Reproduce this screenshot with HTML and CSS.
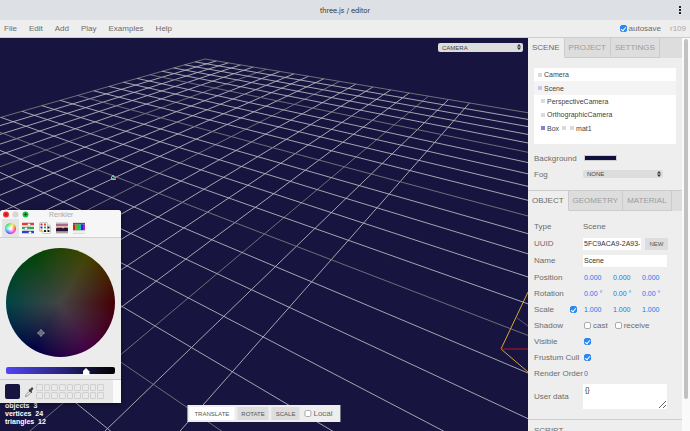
FILE: index.html
```html
<!DOCTYPE html>
<html lang="en">
<head>
  <meta charset="UTF-8" />
  <title>three.js / editor</title>
  <link rel="stylesheet" href="styles.css">
</head>
<body>
  <header class="titlebar">
    <span class="title">three.js / editor</span>
    <button class="more" aria-label="More"><i></i><i></i><i></i></button>
  </header>

  <nav class="menubar">
    <a href="#">File</a>
    <a href="#">Edit</a>
    <a href="#">Add</a>
    <a href="#">Play</a>
    <a href="#">Examples</a>
    <a href="#">Help</a>
    <label class="autosave"><input type="checkbox" checked> autosave</label>
    <span class="version">r109</span>
  </nav>

  <main class="editor">
    <section class="viewport">
      <svg class="scene" viewBox="0 38 528 393" preserveAspectRatio="xMinYMin slice">
        <g id="grid"></g>
        <path d="M517 318L528 326" stroke="#77778c" stroke-width=".7" />
        <path d="M528 292L501 349L528 372" fill="none" stroke="#d8a82c" />
        <path d="M501 349H528" stroke="#b5122c" />
        <path d="M111.500 176.500v3h4l-1-3" fill="none" stroke="#e0b04a" />
        <rect x="112" y="175" width="2" height="2" fill="#35d0dc" />
      </svg>

      <div class="select camera">
        <select aria-label="Camera"><option>CAMERA</option></select>
        <svg viewBox="0 0 4 6"><path d="M2 0L4 2.400H0zM2 6L4 3.600H0z" /></svg>
      </div>

      <div class="stats">objects &nbsp;3<br>vertices &nbsp;24<br>triangles &nbsp;12</div>

      <div class="toolbar">
        <button class="selected">TRANSLATE</button>
        <button>ROTATE</button>
        <button>SCALE</button>
        <label><input type="checkbox"> Local</label>
      </div>
    </section>

    <aside class="sidebar">
      <div class="content">
        <div class="tabs">
          <button class="active">SCENE</button>
          <button>PROJECT</button>
          <button>SETTINGS</button>
        </div>
        <div class="panel scene-panel">
          <ul class="outliner">
            <li><i></i>Camera</li>
            <li class="current"><i class="lilac"></i>Scene</li>
            <li class="child"><i></i>PerspectiveCamera</li>
            <li class="child"><i></i>OrthographicCamera</li>
            <li class="child"><i class="blue"></i>Box<i class="geometry"></i><i class="material"></i>mat1</li>
          </ul>
          <div class="row"><label for="bg">Background</label><button id="bg" class="color" aria-label="Background color"></button></div>
          <div class="row">
            <label for="fog">Fog</label>
            <div class="select fog">
              <select id="fog"><option>NONE</option></select>
              <svg viewBox="0 0 4 6"><path d="M2 0L4 2.400H0zM2 6L4 3.600H0z" /></svg>
            </div>
          </div>
        </div>

        <div class="tabs object-tabs">
          <button class="active">OBJECT</button>
          <button>GEOMETRY</button>
          <button>MATERIAL</button>
        </div>
        <div class="panel object-panel">
          <div class="row tall"><span class="label">Type</span><span>Scene</span></div>
          <div class="row tall"><label for="uuid">UUID</label><input id="uuid" class="text uuid" type="text" value="5FC9ACA9-2A93-"><button class="new">NEW</button></div>
          <div class="row tall"><label for="name">Name</label><input id="name" class="text" type="text" value="Scene"></div>
          <div class="row"><label for="px">Position</label><input id="px" class="number" value="0.000"><input class="number" aria-label="Position y" value="0.000"><input class="number" aria-label="Position z" value="0.000"></div>
          <div class="row"><label for="rx">Rotation</label><input id="rx" class="number" value="0.00 °"><input class="number" aria-label="Rotation y" value="0.00 °"><input class="number" aria-label="Rotation z" value="0.00 °"></div>
          <div class="row"><label class="short" for="sx">Scale</label><input type="checkbox" class="lock" aria-label="Lock scale" checked><input id="sx" class="number" value="1.000"><input class="number" aria-label="Scale y" value="1.000"><input class="number" aria-label="Scale z" value="1.000"></div>
          <div class="row"><span class="label">Shadow</span><label class="check"><input type="checkbox">cast</label><label class="check"><input type="checkbox">receive</label></div>
          <div class="row"><label for="visible">Visible</label><input id="visible" class="inset" type="checkbox" checked></div>
          <div class="row"><label for="cull">Frustum Cull</label><input id="cull" class="inset" type="checkbox" checked></div>
          <div class="row"><label for="order">Render Order</label><input id="order" class="number" value="0"></div>
          <div class="row data"><label for="data">User data</label><textarea id="data">{}</textarea></div>
        </div>
        <div class="script-panel">SCRIPT</div>
      </div>
      <div class="scrollbar"><div class="thumb"></div></div>
    </aside>
  </main>

  <section class="colors">
    <div class="colors-head">
      <div class="colors-title">
        <svg class="lights" viewBox="0 0 27 7">
          <circle cx="4" cy="3.500" r="3" fill="#f4323c" /><path d="M2.800 2.300l2.400 2.400m0-2.400l-2.400 2.400" stroke="#7c0008" stroke-width=".8" />
          <circle cx="13.500" cy="3.500" r="2.800" fill="#d8d8d8" stroke="#c6c6c6" stroke-width=".4" />
          <circle cx="23.500" cy="3.500" r="3" fill="#19c440" /><path d="M21.800 3.500h3.400M23.500 1.800v3.400" stroke="#065c14" stroke-width=".9" />
        </svg>
        <span>Renkler</span>
      </div>
      <div class="modes">
        <button class="on" aria-label="Wheel"><span class="mini-wheel"></span></button>
        <button aria-label="Sliders">
          <svg viewBox="0 0 12 12"><path d="M0 2h12" stroke="#e23b3b" stroke-width="2.500" /><path d="M0 6h12" stroke="#2fae4c" stroke-width="2.500" /><path d="M0 10h12" stroke="#2b3fd4" stroke-width="2.500" /><path d="M0 4h12M0 8h12" stroke="#ddd" /><path d="M7 1l1.500 1.500V4h-3V2.500zM4 5l1.500 1.500V8h-3V6.500zM8 9l1.500 1.500V12h-3v-1.500z" fill="#fff" stroke="#888" stroke-width=".4" /></svg>
        </button>
        <button aria-label="Palettes">
          <svg viewBox="0 0 12 12"><rect x="3.500" y="3" width="8" height="8.500" rx="1" fill="#fff" stroke="#aaa" stroke-width=".6" /><rect x=".5" y=".5" width="8" height="9" rx="1" fill="#fff" stroke="#aaa" stroke-width=".6" /><path d="M1.500 1.500h2v2h-2z" fill="#b33" /><path d="M5 1.500h2v2H5z" fill="#e33" /><path d="M1.500 4.500h2v2h-2z" fill="#22b" /><path d="M5 4.500h2v2H5z" fill="#2a4" /><path d="M8.500 4.500h2v2h-2zM5 8h2v2H5zM8.500 8h2v2h-2z" fill="#222" /><path d="M1.500 7.500h2v1.500h-2z" fill="#c9a820" /></svg>
        </button>
        <button aria-label="Image">
          <svg viewBox="0 0 12 12"><rect y=".5" width="12" height="11" fill="#bbb" /><path d="M0 2h12v2H0z" fill="#a06a92" /><path d="M0 4h12v2.500H0z" fill="#f4b99d" /><path d="M0 6.500l2-1 1 .5 2-.5 2 1 2-1 3 .5V9H0z" fill="#1f1830" /><path d="M0 9h12v1.500H0z" fill="#a77b9d" /></svg>
        </button>
        <button aria-label="Pencils">
          <svg viewBox="0 0 12 12"><rect y=".5" width="12" height="11" fill="#c4c4c4" /><path d="M0 1h12v1.500H0z" fill="#555" /><path d="M0 2.500h2V8H0z" fill="#c22" /><path d="M2 2.500h2V8H2z" fill="#7a2" /><path d="M4 2.500h2V8H4z" fill="#1c5" /><path d="M6 2.500h2V8H6z" fill="#1bc" /><path d="M8 2.500h2V8H8z" fill="#22d" /><path d="M10 2.500h2V8h-2z" fill="#a2b" /><path d="M0 9h12v2H0z" fill="#eee" /></svg>
        </button>
      </div>
    </div>
    <div class="wheel-box">
      <div class="wheel">
        <svg class="cross" viewBox="0 0 8 8"><circle cx="4" cy="4" r="2.400" /><path d="M4 0v8M0 4h8" /></svg>
      </div>
      <input class="brightness" type="range" aria-label="Brightness" min="0" max="100" value="75">
    </div>
    <div class="colors-foot">
      <div class="swatch"></div>
      <svg class="pipette" viewBox="0 0 10 12"><path d="M1.500 10.500l.6-2L6 4.500l1.500 1.500-4 4z" fill="#eee" stroke="#777" stroke-width=".8" /><path d="M5 3.600L7.800 6.500" stroke="#444" stroke-width="1.400" /><path d="M6.300 4.800l1.800-2.200" stroke="#444" stroke-width="2.400" stroke-linecap="round" /></svg>
      <div class="saved">
        <i></i><i></i><i></i><i></i><i></i><i></i><i></i><i></i><i></i>
        <i></i><i></i><i></i><i></i><i></i><i></i><i></i><i></i><i></i>
      </div>
      <div class="edge"></div>
    </div>
  </section>

  <script src="grid.js"></script>
</body>
</html>
```

FILE: styles.css
```css
* {
  box-sizing: border-box;
}

body {
  margin: 0;
  height: 100vh;
  display: flex;
  flex-direction: column;
  overflow: hidden;
  background: #eee;
  color: #6c6c6c;
  font-family: "Liberation Sans", Arial, sans-serif;
  font-size: 8px;
}

button, input, select, textarea {
  margin: 0;
  padding: 0;
  border: 0;
  font-family: inherit;
  color: inherit;
}

input[type="checkbox"] {
  appearance: none;
  flex: none;
  width: 7px;
  height: 7px;
  border: 1px solid #aaa;
  border-radius: 2px;
  background: #fff;
}

input[type="checkbox"]:checked {
  border-color: #2b87f3;
  background: #2b87f3;
  display: grid;
  place-items: center;
}

input[type="checkbox"]:checked::after {
  content: "";
  width: 2px;
  height: 4px;
  border: solid #fff;
  border-width: 0 1px 1px 0;
  transform: rotate(40deg);
}

.titlebar {
  flex: none;
  height: 20px;
  display: flex;
  align-items: center;
  justify-content: center;
  background: #dde1e6;
  color: #333;
  font-family: Inter, sans-serif;
  font-size: 7px;
  position: relative;
}

.more {
  position: absolute;
  right: 8px;
  display: grid;
  gap: 1px;
  padding: 0 1px;
  background: none;
}

.more i {
  width: 2px;
  height: 2px;
  background: #222;
}

.menubar {
  flex: none;
  height: 18px;
  display: flex;
  align-items: center;
  gap: 12px;
  padding: 0 4px;
  border-bottom: 1px solid #ccc;
}

.menubar a {
  color: #6c6c6c;
  text-decoration: none;
}

.autosave {
  display: flex;
  align-items: center;
  gap: 2px;
  margin-left: auto;
}

.version {
  margin-left: -3px;
  color: #aaa;
}

.editor {
  flex: 1;
  min-height: 0;
  display: flex;
}

.viewport {
  flex: 1;
  min-width: 0;
  position: relative;
  background: #17153f;
  overflow: hidden;
}

.scene {
  display: block;
  width: 100%;
  height: 100%;
}

#grid line {
  stroke: #b4b4bd;
  stroke-width: .9;
}

#grid line.major {
  stroke: #787880;
}

.select {
  position: relative;
}

.select select {
  display: block;
  appearance: none;
  width: 100%;
  height: 8px;
  padding: 0 4px;
  border-radius: 2px;
  background: #ddd;
  color: #444;
  font-size: 6px;
  line-height: 8px;
}

.select svg {
  position: absolute;
  top: 1px;
  right: 2px;
  width: 4px;
  height: 6px;
  fill: #333;
  pointer-events: none;
}

.camera {
  position: absolute;
  top: 5px;
  right: 5px;
  width: 85px;
}

.camera select {
  height: 9px;
}

.stats {
  position: absolute;
  left: 5px;
  bottom: 5px;
  color: #fff;
  font-size: 7px;
  font-weight: bold;
  line-height: 8px;
}

.toolbar {
  position: absolute;
  left: 50%;
  bottom: 9px;
  transform: translateX(-50%);
  height: 17px;
  padding: 2px;
  display: flex;
  align-items: center;
  gap: 3px;
  background: #eee;
}

.toolbar button {
  height: 13px;
  padding: 0 4px;
  background: #ddd;
  color: #555;
  font-size: 6px;
}

.toolbar button.selected {
  background: #fff;
  padding: 0 5px;
}

.toolbar label {
  display: flex;
  align-items: center;
  gap: 2px;
  padding: 0 6px 0 2px;
}

.sidebar {
  flex: none;
  width: 162px;
  display: flex;
  overflow: hidden;
}

.content {
  flex: 1;
  min-width: 0;
}

.scrollbar {
  flex: none;
  width: 8px;
  padding: 1px 2px;
  background: #fafafa;
}

.thumb {
  height: 92%;
  border-radius: 2px;
  background: #c1c1c1;
}

.tabs {
  display: flex;
  height: 20px;
  background: #ddd;
}

.tabs button {
  padding: 0 4px;
  border-right: 1px solid #ccc;
  border-bottom: 1px solid #ccc;
  background: #ddd;
  color: #9c9c9c;
  font-size: 8px;
}

.tabs button.active {
  background: #eee;
  border-bottom-color: #eee;
  color: #6c6c6c;
}

.object-tabs {
  height: 21px;
  border-top: 1px solid #ccc;
}

.panel {
  padding: 0 6px;
}

.scene-panel {
  padding-top: 10px;
  padding-bottom: 8px;
}

.outliner {
  height: 76px;
  margin: 0 0 6px;
  padding: 0 0 9px;
  display: grid;
  grid-template-rows: repeat(5, 1fr);
  list-style: none;
  background: #fff;
  color: #444;
  font-size: 7px;
}

.outliner li {
  display: flex;
  align-items: center;
  padding-left: 4px;
}

.outliner .child {
  padding-left: 7px;
}

.outliner .current {
  background: #f4f4f4;
}

.outliner i {
  width: 4px;
  height: 4px;
  margin-right: 2px;
  background: #dadada;
}

.outliner .lilac {
  background: #c8c4f6;
}

.outliner .blue {
  background: #8080e0;
}

.outliner .geometry {
  margin: 0 4px 0 3px;
}

.row {
  display: flex;
  align-items: center;
  height: 16px;
}

.row.tall {
  height: 17px;
}

.row > label:first-child, .label {
  flex: none;
  width: 49px;
  white-space: nowrap;
}

.row > label.short:first-child {
  width: 36px;
}

.lock {
  margin-right: 6px;
}

.color {
  width: 33px;
  height: 6px;
  margin-left: 1px;
  border: 1px solid #ccc;
  background: #110f3c;
}

.fog {
  width: 80px;
}

.object-panel {
  padding-top: 7px;
}

.text {
  width: 84px;
  height: 12px;
  padding: 0 1px;
  background: #fff;
  color: #333;
  font-size: 7px;
}

.uuid {
  width: 58px;
}

.new {
  width: 23px;
  height: 12px;
  margin-left: 4px;
  background: #ddd;
  color: #555;
  font-size: 6px;
}

.number {
  width: 29px;
  background: none;
  color: #1478f0;
  font-size: 7px;
}

.row .number {
  padding-left: 1px;
}

.check {
  display: flex;
  align-items: center;
  gap: 2px;
  margin: 0 6px 0 1px;
}

.inset {
  margin-left: 1px;
}

.row.data {
  height: 30px;
}

textarea {
  width: 84px;
  height: 25px;
  padding: 2px;
  background: #fff;
  color: #333;
  font-size: 7px;
}

.script-panel {
  margin-top: 8px;
  padding: 6px;
  border-top: 1px solid #ccc;
}

/* system color picker, floats over the editor */
.colors {
  position: absolute;
  left: 0;
  bottom: 28px;
  width: 121px;
  border-radius: 3px 3px 0 0;
  background: #ececec;
  box-shadow: 0 1px 4px rgba(0, 0, 0, .5);
  overflow: hidden;
}

.colors-head {
  background: #f6f6f6;
  border-bottom: 1px solid #d0d0d0;
}

.colors-title {
  height: 9px;
  display: flex;
  align-items: center;
  color: #aaa;
  font-size: 7px;
}

.lights {
  width: 27px;
  height: 7px;
  margin: 0 20px 0 2px;
}

.modes {
  display: flex;
  padding-left: 2px;
}

.modes button {
  display: grid;
  place-items: center;
  width: 17px;
  height: 18px;
  background: none;
}

.modes .on {
  background: #e4e4e4;
}

.modes svg {
  width: 12px;
  height: 12px;
}

.mini-wheel {
  width: 11px;
  height: 11px;
  border-radius: 50%;
  background: radial-gradient(#fff 10%, transparent 70%), conic-gradient(from 90deg, #f33, #e3e, #44f, #2dd, #2d4, #ee3, #f33);
}

.wheel-box {
  padding: 10px 6px 5px;
}

.wheel {
  position: relative;
  width: 109px;
  height: 109px;
  border-radius: 50%;
  background: radial-gradient(#444 0%, rgba(68, 68, 68, 0) 70%), conic-gradient(from 90deg, #440004, #440044, #000044, #004444, #004408, #444400, #440004);
}

.cross {
  position: absolute;
  left: 31px;
  top: 81px;
  width: 8px;
  height: 8px;
  fill: none;
  stroke: #aaa;
  stroke-width: .8;
}

.brightness {
  appearance: none;
  display: block;
  width: 109px;
  height: 7px;
  margin-top: 10px;
  border-radius: 2px;
  background: linear-gradient(90deg, #5145f5, #2a2580 50%, #0b0a20 85%, #000);
}

.brightness::-webkit-slider-thumb {
  appearance: none;
  width: 7px;
  height: 7px;
  margin-top: 2px;
  background: #fff;
  clip-path: polygon(50% 0, 100% 50%, 100% 100%, 0 100%, 0 50%);
}

.colors-foot {
  display: flex;
  align-items: center;
  height: 24px;
  padding-left: 5px;
  border-top: 1px solid #ccc;
  background: #e9e9e9;
}

.swatch {
  width: 15px;
  height: 15px;
  border-radius: 2px;
  background: #17153f;
}

.pipette {
  width: 10px;
  height: 12px;
  margin: 0 2px 0 4px;
}

.saved {
  display: grid;
  grid-template-columns: repeat(9, 1fr);
  grid-template-rows: repeat(2, 7px);
  gap: 1px;
  width: 68px;
}

.saved i {
  border: 1px solid #d0d0d0;
  border-radius: 1px;
}

.edge {
  width: 8px;
  height: 100%;
  margin-left: auto;
  background: #fafafa;
}
```

FILE: grid.js
```js
// ground grid seen in perspective, u runs to the right and v towards the left
const U = 0.016189;
const V = 0.023917;

function project(u, v) {
  const w = 1 - U * u - V * v;
  return [
    (205 + 7.958 * u - 14.603 * v) / w,
    (59 + 0.9205 * u + 1.361 * v) / w
  ];
}

function addLine(a, b, major) {
  const line = document.createElementNS("http://www.w3.org/2000/svg", "line");
  line.setAttribute("x1", a[0]);
  line.setAttribute("y1", a[1]);
  line.setAttribute("x2", b[0]);
  line.setAttribute("y2", b[1]);
  if (major) line.setAttribute("class", "major");
  document.getElementById("grid").appendChild(line);
}

for (let u = 0; u <= 17; u++) {
  addLine(project(u, 0), project(u, 24), u % 5 === 0);
}

for (let v = 0; v <= 22; v++) {
  // stop before the line reaches the camera plane
  const end = Math.min(30, (0.95 - V * v) / U);
  addLine(project(0, v), project(end, v), v % 5 === 0);
}
```
